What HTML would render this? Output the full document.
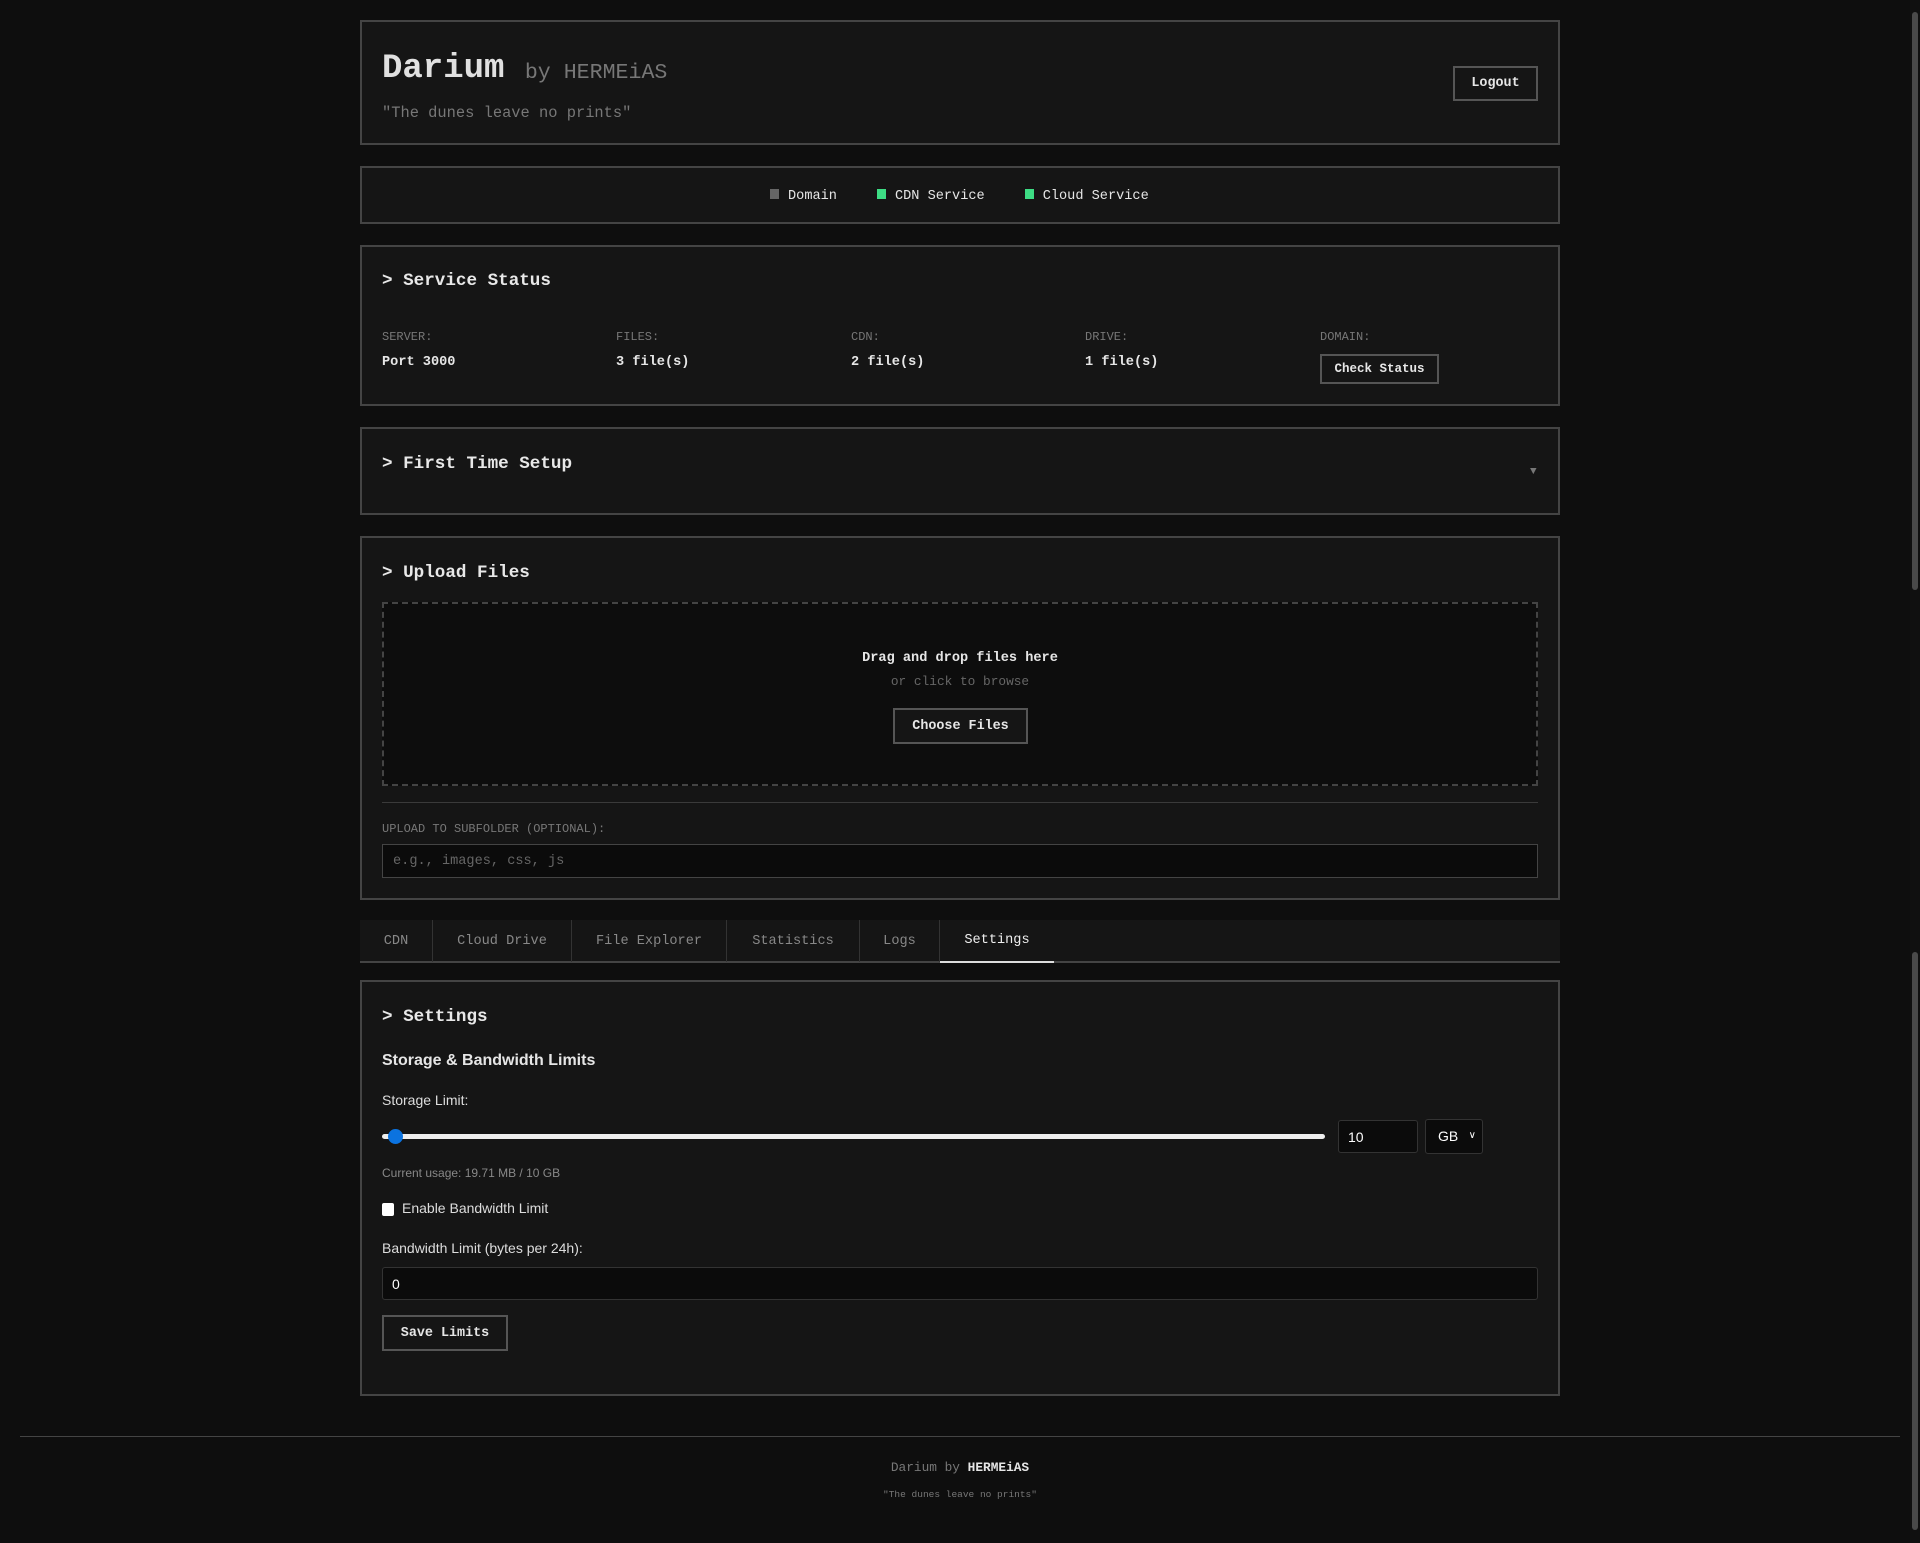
<!DOCTYPE html>
<html><head><meta charset="utf-8"><style>
*{box-sizing:border-box;margin:0;padding:0}
html,body{width:1920px;height:1543px;overflow:hidden;background:#0e0e0e;color:#e6e6e6;font-family:"Liberation Mono",monospace}
.a{position:absolute}
.box{position:absolute;left:360px;width:1200px;background:#151515;border:2px solid #444}
.h2{position:absolute;left:20px;font-size:17.6px;font-weight:bold;color:#e8e8e8}
.btn{position:absolute;border:2px solid #555;background:#151515;color:#e6e6e6;font-size:13.4px;font-weight:bold;display:flex;align-items:center;justify-content:center}
.lbl{font-size:12px;color:#777}
.val{font-size:13.6px;font-weight:bold;color:#e6e6e6}
.sans{font-family:"Liberation Sans",sans-serif}
.tab{position:absolute;top:0;height:42px;font-size:13.6px;color:#888;display:flex;align-items:center;justify-content:center;border-right:1px solid #333}
</style></head><body>

<div class="box" style="top:20px;height:125px">
 <div class="a" style="left:20px;top:28px;font-size:34px;font-weight:bold;color:#e0e0e0">Darium <span style="font-size:21.6px;font-weight:normal;color:#777;position:relative;top:1px">by HERMEiAS</span></div>
 <div class="a" style="left:20px;top:82px;font-size:15.4px;color:#777">"The dunes leave no prints"</div>
 <div class="btn" style="left:1091px;top:44px;width:85px;height:35px">Logout</div>
</div>

<div class="box" style="top:166px;height:58px">
 <div class="a val" style="left:408px;top:21px;font-weight:normal;display:flex;gap:40px;font-size:13.6px">
  <span><span style="display:inline-block;width:9px;height:10px;background:#666;margin-right:9px"></span>Domain</span>
  <span><span style="display:inline-block;width:9px;height:10px;background:#3ddc84;margin-right:9px"></span>CDN Service</span>
  <span><span style="display:inline-block;width:9px;height:10px;background:#3ddc84;margin-right:9px"></span>Cloud Service</span>
 </div>
</div>

<div class="box" style="top:245px;height:161px">
 <div class="h2" style="top:24px">&gt; Service Status</div>
 <div class="a lbl" style="left:20px;top:83px">SERVER:</div><div class="a val" style="left:20px;top:108px">Port 3000</div>
 <div class="a lbl" style="left:254px;top:83px">FILES:</div><div class="a val" style="left:254px;top:108px">3 file(s)</div>
 <div class="a lbl" style="left:489px;top:83px">CDN:</div><div class="a val" style="left:489px;top:108px">2 file(s)</div>
 <div class="a lbl" style="left:723px;top:83px">DRIVE:</div><div class="a val" style="left:723px;top:108px">1 file(s)</div>
 <div class="a lbl" style="left:958px;top:83px">DOMAIN:</div>
 <div class="btn" style="left:958px;top:107px;width:119px;height:30px;font-size:12.5px">Check Status</div>
</div>

<div class="box" style="top:427px;height:88px">
 <div class="h2" style="top:25px">&gt; First Time Setup</div>
 <div class="a" style="left:1168px;top:37px;font-size:11px;color:#777">▼</div>
</div>

<div class="box" style="top:536px;height:364px">
 <div class="h2" style="top:25px">&gt; Upload Files</div>
 <div class="a" style="left:20px;top:64px;width:1156px;height:184px;border:2px dashed #444;background:#0d0d0d">
  <div class="a val" style="left:0;right:0;top:47px;text-align:center">Drag and drop files here</div>
  <div class="a" style="left:0;right:0;top:70px;text-align:center;font-size:12.8px;color:#666">or click to browse</div>
  <div class="btn" style="left:509px;top:104px;width:135px;height:36px">Choose Files</div>
 </div>
 <div class="a" style="left:20px;top:264px;width:1156px;height:1px;background:#3a3a3a"></div>
 <div class="a lbl" style="left:20px;top:284px">UPLOAD TO SUBFOLDER (OPTIONAL):</div>
 <div class="a" style="left:20px;top:306px;width:1156px;height:34px;border:1px solid #444;background:#0b0b0b;font-size:13.6px;color:#666;padding:9px 10px">e.g., images, css, js</div>
</div>

<div class="a" style="left:360px;top:920px;width:1200px;height:43px;background:#151515;border-bottom:2px solid #444">
 <div class="tab" style="left:0;width:73px">CDN</div>
 <div class="tab" style="left:73px;width:139px">Cloud Drive</div>
 <div class="tab" style="left:212px;width:155px">File Explorer</div>
 <div class="tab" style="left:367px;width:133px">Statistics</div>
 <div class="tab" style="left:500px;width:80px">Logs</div>
 <div class="tab" style="left:580px;width:114px;color:#eee;border-right:none;border-bottom:2px solid #ddd;height:43px">Settings</div>
</div>

<div class="box" style="top:980px;height:416px">
 <div class="h2" style="top:25px">&gt; Settings</div>
 <div class="a sans" style="left:20px;top:70px;font-size:16px;font-weight:bold;color:#e6e6e6">Storage &amp; Bandwidth Limits</div>
 <div class="a sans" style="left:20px;top:110px;font-size:14px;color:#ddd">Storage Limit:</div>
 <div class="a" style="left:20px;top:152px;width:943px;height:5px;background:#eee;border-radius:3px"></div>
 <div class="a" style="left:26px;top:147px;width:15px;height:15px;background:#0b73e0;border-radius:50%"></div>
 <div class="a sans" style="left:976px;top:138px;width:80px;height:33px;border:1px solid #333;border-radius:3px;background:#0b0b0b;font-size:14px;padding:8px 9px;color:#fff">10</div>
 <div class="a sans" style="left:1063px;top:137px;width:58px;height:35px;border:1px solid #333;border-radius:3px;background:#0b0b0b;font-size:14px;padding:8px 12px;color:#fff">GB <span style="font-size:10px;position:absolute;right:6px;top:10px">&#x2228;</span></div>
 <div class="a sans" style="left:20px;top:184px;font-size:12px;color:#888">Current usage: 19.71 MB / 10 GB</div>
 <div class="a" style="left:20px;top:221px;width:12px;height:13px;background:#fff;border-radius:2px"></div>
 <div class="a sans" style="left:40px;top:218px;font-size:14px;color:#ddd">Enable Bandwidth Limit</div>
 <div class="a sans" style="left:20px;top:258px;font-size:14px;color:#ddd">Bandwidth Limit (bytes per 24h):</div>
 <div class="a sans" style="left:20px;top:285px;width:1156px;height:33px;border:1px solid #333;border-radius:3px;background:#0b0b0b;font-size:14px;padding:8px 9px;color:#fff">0</div>
 <div class="btn" style="left:20px;top:333px;width:126px;height:36px">Save Limits</div>
</div>

<div class="a" style="left:20px;top:1436px;width:1880px;height:1px;background:#444"></div>
<div class="a" style="left:0;width:1920px;top:1460px;text-align:center;font-size:12.8px;color:#777">Darium by <b style="color:#e6e6e6">HERMEiAS</b></div>
<div class="a" style="left:0;width:1920px;top:1489px;text-align:center;font-size:9.5px;color:#777">"The dunes leave no prints"</div>

<div class="a" style="left:1910px;top:0;width:10px;height:1543px;background:#101010"></div>
<div class="a" style="left:1912px;top:12px;width:6px;height:578px;background:#4a4a4a;border-radius:3px"></div>
<div class="a" style="left:1912px;top:952px;width:6px;height:578px;background:#4a4a4a;border-radius:3px"></div>
</body></html>
